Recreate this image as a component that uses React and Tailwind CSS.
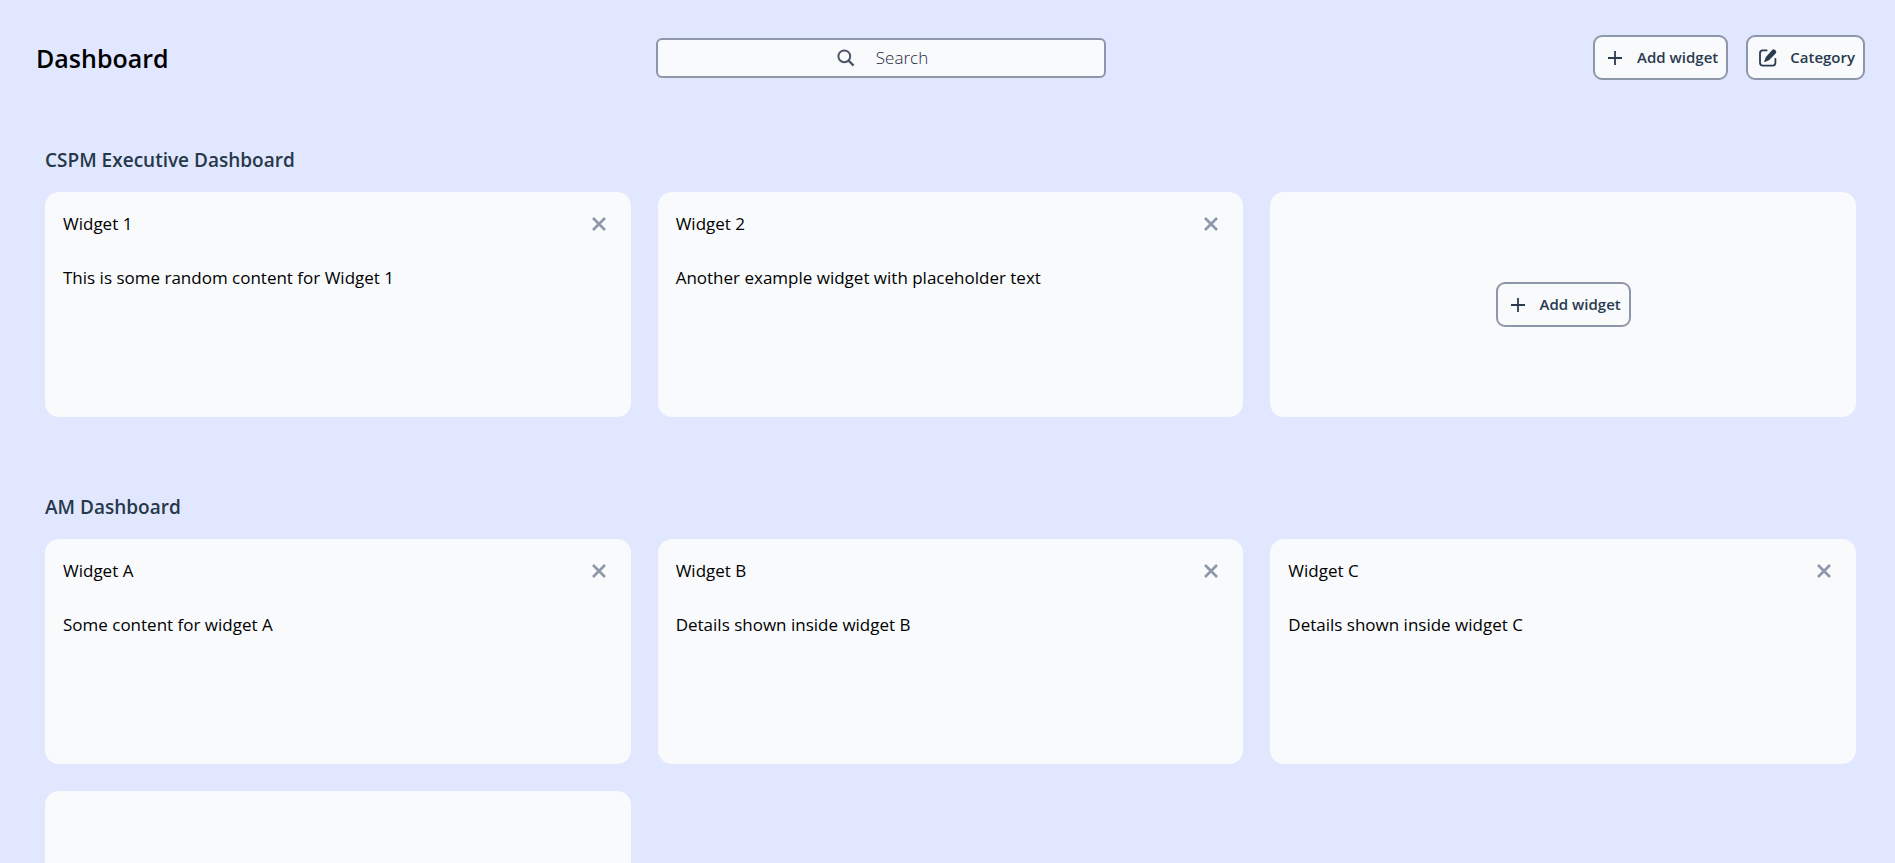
const sections = [
  {
    title: "CSPM Executive Dashboard",
    widgets: [
      { name: "Widget 1", text: "This is some random content for Widget 1" },
      { name: "Widget 2", text: "Another example widget with placeholder text" },
    ],
  },
  {
    title: "AM Dashboard",
    widgets: [
      { name: "Widget A", text: "Some content for widget A" },
      { name: "Widget B", text: "Details shown inside widget B" },
      { name: "Widget C", text: "Details shown inside widget C" },
    ],
  },
];

function PlusIcon() {
  return (
    <svg viewBox="0 0 20 20" className="size-5 shrink-0" fill="none" stroke="currentColor" strokeWidth="1.8" aria-hidden="true">
      <path d="M10 3v14M3 10h14" />
    </svg>
  );
}

function EditIcon() {
  return (
    <svg viewBox="0 0 20 20" className="size-5 shrink-0" fill="none" aria-hidden="true">
      <path
        d="M8.600 2.400H4.800A2.800 2.800 0 0 0 2 5.200V14.800A2.800 2.800 0 0 0 4.800 17.600H14.600A2.800 2.800 0 0 0 17.400 14.800V11"
        stroke="currentColor"
        strokeWidth="1.8"
        strokeLinecap="round"
      />
      <path
        d="M14.200 2a2 2 0 0 1 2.900 0l.5.500a2 2 0 0 1 0 2.900l-6.600 6.900-4.200 1.700a.5.5 0 0 1-.6-.7l1.700-4.400z"
        fill="currentColor"
      />
    </svg>
  );
}

function SearchIcon() {
  return (
    <svg viewBox="0 0 20 20" className="size-5 shrink-0" fill="none" stroke="currentColor" strokeWidth="2" aria-hidden="true">
      <circle cx="8.300" cy="8.300" r="5.900" />
      <path d="M12.600 12.600l5 5" strokeWidth="2.200" />
    </svg>
  );
}

function CloseIcon() {
  return (
    <svg viewBox="0 0 20 20" className="size-5" fill="none" stroke="currentColor" strokeWidth="2.600" aria-hidden="true">
      <path d="M4 4l12 12M16 4L4 16" />
    </svg>
  );
}

function ActionButton({ icon: Icon, children }) {
  return (
    <button
      type="button"
      className="flex h-[45px] items-center gap-3 rounded-[9px] border-2 border-[#8e97a9] bg-[#f8fafc] pr-2 pl-[10px] text-[15px] font-semibold whitespace-nowrap text-[#2a3b4f]"
    >
      <Icon />
      {children}
    </button>
  );
}

function WidgetCard({ name, text }) {
  return (
    <article className="h-[225px] rounded-[14px] bg-[#f8fafc] p-[18px] text-[17px] leading-[27px] text-black">
      <div className="flex items-center justify-between">
        <h3>{name}</h3>
        <button type="button" aria-label={`Remove ${name}`} className="px-1 text-[#8e97a9]">
          <CloseIcon />
        </button>
      </div>
      <p className="mt-[27px]">{text}</p>
    </article>
  );
}

function Section({ title, widgets }) {
  return (
    <section className="px-[9px]">
      <h2 className="text-[19px] leading-[30px] font-semibold text-[#273849]">{title}</h2>
      <div className="mt-[17px] grid grid-cols-3 gap-[27px]">
        {widgets.map((w) => (
          <WidgetCard key={w.name} {...w} />
        ))}
        <div className="flex h-[225px] items-center justify-center rounded-[14px] bg-[#f8fafc]">
          <ActionButton icon={PlusIcon}>Add widget</ActionButton>
        </div>
      </div>
    </section>
  );
}

export default function App() {
  return (
    <div className="min-h-screen bg-[#e0e7ff] pt-[35px] pr-[30px] pb-9 pl-9 font-['Open_Sans',sans-serif]">
      <header className="flex items-center justify-between">
        <h1 className="text-[25px] leading-9 font-semibold text-black">Dashboard</h1>
        <label className="flex h-10 w-[450px] items-center justify-center gap-5 rounded-md border-2 border-[#8e97a9] bg-[#f8fafc] pl-1 text-[#4a5568]">
          <SearchIcon />
          <input
            type="text"
            aria-label="Search"
            placeholder="Search"
            className="w-[54px] bg-transparent text-[17px] font-light outline-none placeholder:text-[#1e293b]"
          />
        </label>
        <div className="flex gap-[18px]">
          <ActionButton icon={PlusIcon}>Add widget</ActionButton>
          <ActionButton icon={EditIcon}>Category</ActionButton>
        </div>
      </header>
      <main className="mt-[65px] flex flex-col gap-[75px]">
        {sections.map((s) => (
          <Section key={s.title} {...s} />
        ))}
      </main>
    </div>
  );
}
